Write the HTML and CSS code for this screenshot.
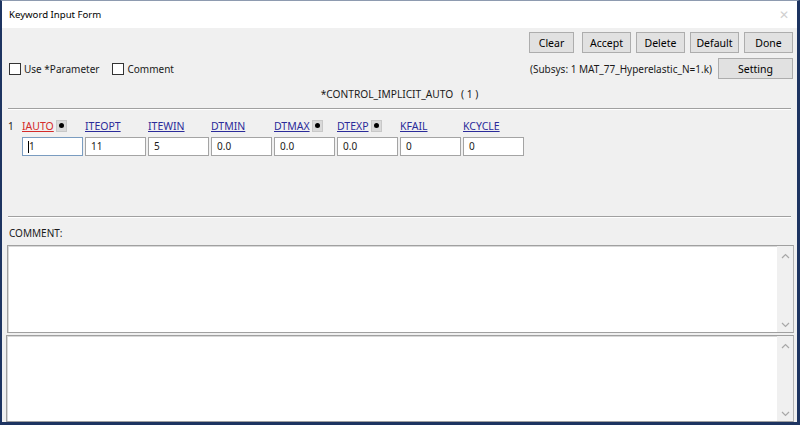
FILE: index.html
```html
<!DOCTYPE html>
<html lang="en">
<head>
    <meta charset="UTF-8">
    <title>Keyword Input Form</title>
    <link rel="stylesheet" href="styles.css">
</head>
<body>
    <div class="window">
        <div class="titlebar">
            <span class="title">Keyword Input Form</span>
            <span class="close">&#x2715;</span>
        </div>

        <div class="content">
            <!-- action buttons -->
            <div class="button-row">
                <button class="btn btn-clear">Clear</button>
                <button class="btn">Accept</button>
                <button class="btn">Delete</button>
                <button class="btn">Default</button>
                <button class="btn">Done</button>
            </div>

            <div class="option-row">
                <label class="check"><span class="box"></span>Use *Parameter</label>
                <label class="check"><span class="box"></span>Comment</label>
                <span class="subsys">(Subsys: 1 MAT_77_Hyperelastic_N=1.k)</span>
                <button class="btn btn-setting">Setting</button>
            </div>

            <div class="keyword">*CONTROL_IMPLICIT_AUTO &nbsp;&nbsp;( 1 )</div>

            <div class="separator"></div>

            <!-- card 1 -->
            <div class="card">
                <span class="card-no">1</span>
                <div class="fields">
                    <div class="field">
                        <div class="label"><a class="required">IAUTO</a><span class="pick"></span></div>
                        <div class="input focused"><span class="caret"></span>1</div>
                    </div>
                    <div class="field">
                        <div class="label"><a>ITEOPT</a></div>
                        <div class="input">11</div>
                    </div>
                    <div class="field">
                        <div class="label"><a>ITEWIN</a></div>
                        <div class="input">5</div>
                    </div>
                    <div class="field">
                        <div class="label"><a>DTMIN</a></div>
                        <div class="input">0.0</div>
                    </div>
                    <div class="field">
                        <div class="label"><a>DTMAX</a><span class="pick"></span></div>
                        <div class="input">0.0</div>
                    </div>
                    <div class="field">
                        <div class="label"><a>DTEXP</a><span class="pick"></span></div>
                        <div class="input">0.0</div>
                    </div>
                    <div class="field">
                        <div class="label"><a>KFAIL</a></div>
                        <div class="input">0</div>
                    </div>
                    <div class="field">
                        <div class="label"><a>KCYCLE</a></div>
                        <div class="input">0</div>
                    </div>
                </div>
            </div>

            <div class="separator lower"></div>

            <div class="comment-label">COMMENT:</div>

            <div class="textbox first">
                <div class="text-area"></div>
                <div class="scrollbar">
                    <svg width="9" height="6" viewBox="0 0 9 6"><path d="M1 5 L4.5 1.5 L8 5" fill="none" stroke="#a8a8a8" stroke-width="1.2"/></svg>
                    <svg width="9" height="6" viewBox="0 0 9 6"><path d="M1 1 L4.5 4.5 L8 1" fill="none" stroke="#a8a8a8" stroke-width="1.2"/></svg>
                </div>
            </div>
            <div class="textbox second">
                <div class="text-area"></div>
                <div class="scrollbar">
                    <svg width="9" height="6" viewBox="0 0 9 6"><path d="M1 5 L4.5 1.5 L8 5" fill="none" stroke="#a8a8a8" stroke-width="1.2"/></svg>
                    <svg width="9" height="6" viewBox="0 0 9 6"><path d="M1 1 L4.5 4.5 L8 1" fill="none" stroke="#a8a8a8" stroke-width="1.2"/></svg>
                </div>
            </div>
        </div>
    </div>
</body>
</html>
```

FILE: styles.css
```css
html, body {
    margin: 0;
    padding: 0;
}

body {
    font-family: 'Noto Sans', 'Liberation Sans', sans-serif;
    font-size: 10px;
    color: #1a1a1a;
}

.window {
    width: 800px;
    height: 425px;
    box-sizing: border-box;
    border-top: 1px solid #8e9bb0;
    border-left: 2px solid #1d3461;
    border-right: 3px solid #1d3461;
    border-bottom: 3px solid #1d3461;
    background: #f0f0f0;
    display: flex;
    flex-direction: column;
}

.titlebar {
    height: 28px;
    background: #fff;
    display: flex;
    align-items: center;
    justify-content: space-between;
    padding: 0 8px 0 7px;
}

.title {
    font-size: 9.6px;
    color: #000;
}

.close {
    color: #d0d0d0;
    font-size: 12px;
}

.content {
    flex: 1;
    display: flex;
    flex-direction: column;
    padding: 0 2px 0 2px;
}

.btn {
    font-family: inherit;
    font-size: 10.5px;
    color: #000;
    background: #e1e1e1;
    border: 1px solid #adadad;
    height: 21px;
    width: 49px;
    padding: 0;
    margin: 0;
}

.button-row {
    display: flex;
    justify-content: flex-end;
    gap: 5px;
    margin-top: 4px;
    padding-right: 2px;
}

.btn-clear {
    width: 45px;
    margin-right: 3px;
}

.option-row {
    display: flex;
    align-items: center;
    margin-top: 5px;
    padding-left: 5px;
    padding-right: 2px;
    height: 21px;
}

.check {
    display: flex;
    align-items: center;
    margin-right: 13px;
}

.box {
    width: 10px;
    height: 10px;
    border: 1px solid #333;
    background: #fff;
    margin-right: 3px;
}

.subsys {
    margin-left: auto;
    margin-right: 6px;
}

.btn-setting {
    width: 75px;
}

.keyword {
    text-align: center;
    margin-top: 6px;
    height: 18px;
    line-height: 18px;
    font-size: 10.2px;
}

.separator {
    height: 0;
    border-top: 1px solid #a0a0a0;
    border-bottom: 1px solid #fff;
    margin: 5px 4px 0 4px;
}

.card {
    display: flex;
    margin-top: 8px;
    height: 45px;
}

.card-no {
    width: 18px;
    padding-left: 4px;
    box-sizing: border-box;
    line-height: 16px;
}

.fields {
    display: grid;
    grid-template-columns: repeat(8, 61px);
    column-gap: 2px;
}

.label {
    display: flex;
    align-items: center;
    height: 16px;
    font-size: 10.5px;
}

.label a {
    color: #2b2b9a;
    text-decoration: underline;
}

.label a.required {
    color: #d42a2a;
}

.pick {
    width: 11px;
    height: 12px;
    margin-left: 2px;
    background: #d9d9d9;
    border: 1px solid #c8c8c8;
    box-sizing: border-box;
    position: relative;
}

.pick::after {
    content: "";
    position: absolute;
    left: 2px;
    top: 2px;
    width: 5px;
    height: 5px;
    border-radius: 50%;
    background: #000;
}

.input {
    margin-top: 3px;
    height: 19px;
    box-sizing: border-box;
    border: 1px solid #a4a4a4;
    background: #fff;
    padding-left: 5px;
    line-height: 17px;
    display: flex;
    align-items: center;
}

.input.focused {
    border-color: #7a9cc0;
}

.caret {
    width: 1px;
    height: 12px;
    background: #000;
}

.separator.lower {
    margin-top: 53px;
}

.comment-label {
    padding-left: 5px;
    margin-top: 6px;
    height: 18px;
    line-height: 18px;
}

.textbox {
    display: flex;
    border: 1px solid #a0a0a0;
    border-right-color: #b4b4b4;
    background: #fff;
    box-shadow: inset 1px 1px 0 #d8d8d8;
}

.textbox.first {
    margin: 3px 1px 0 3px;
    height: 86px;
}

.textbox.second {
    margin: 2px 1px 0 2px;
    height: 85px;
}

.text-area {
    flex: 1;
}

.scrollbar {
    width: 16px;
    background: #f0f0f0;
    display: flex;
    flex-direction: column;
    justify-content: space-between;
    align-items: center;
    padding: 7px 0 4px 0;
}
```
